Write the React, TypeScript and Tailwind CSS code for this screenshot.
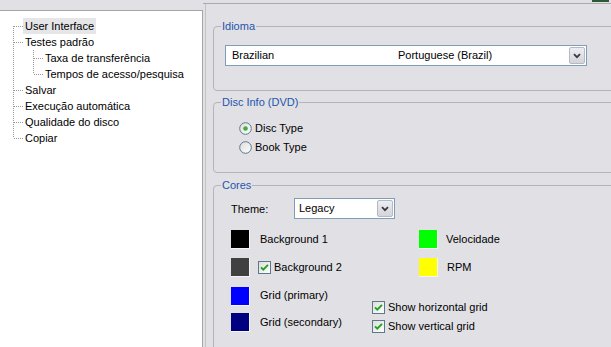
import React from 'react';

type TreeItem = { label: string; kind: 'first' | 'mid' | 'last' | 'child' | 'lastChild'; selected?: boolean };

const tree: TreeItem[] = [
  { label: 'User Interface', kind: 'first', selected: true },
  { label: 'Testes padrão', kind: 'mid' },
  { label: 'Taxa de transferência', kind: 'child' },
  { label: 'Tempos de acesso/pesquisa', kind: 'lastChild' },
  { label: 'Salvar', kind: 'mid' },
  { label: 'Execução automática', kind: 'mid' },
  { label: 'Qualidade do disco', kind: 'mid' },
  { label: 'Copiar', kind: 'last' },
];

const Dots = ({ d }: { d: string }) => (
  <path d={d} stroke="#9a9a9a" strokeWidth={1} strokeDasharray="1 1" fill="none" shapeRendering="crispEdges" />
);

const Connector = ({ kind }: { kind: TreeItem['kind'] }) => {
  if (kind === 'child' || kind === 'lastChild') {
    return (
      <svg width="30" height="16" className="shrink-0">
        <Dots d="M0.5 0 V16" />
        <Dots d={kind === 'lastChild' ? 'M20.5 0 V8' : 'M20.5 0 V16'} />
        <Dots d="M21 8.5 H30" />
      </svg>
    );
  }
  const v = kind === 'first' ? 'M0.5 8 V16' : kind === 'last' ? 'M0.5 0 V8' : 'M0.5 0 V16';
  return (
    <svg width="10" height="16" className="shrink-0">
      <Dots d={v} />
      <Dots d="M1 8.5 H10" />
    </svg>
  );
};

const Chevron = () => (
  <svg width="8" height="6" viewBox="0 0 8 6">
    <path d="M1 1.2 L4 4.2 L7 1.2" stroke="#3a3a3a" strokeWidth="1.8" fill="none" />
  </svg>
);

const Combo = ({ w, children }: { w: string; children: React.ReactNode }) => (
  <div className={`flex h-[21px] ${w} items-center border border-[#7f9db9] bg-white`}>
    <div className="flex flex-1 items-center leading-[19px]">{children}</div>
    <div className="mr-[1px] flex h-[17px] w-[16px] items-center justify-center rounded-[2px] border border-[#b6b8c4] bg-gradient-to-b from-[#eceef2] to-[#d3d4dc]">
      <Chevron />
    </div>
  </div>
);

const CheckBox = () => (
  <svg width="13" height="13" viewBox="0 0 13 13" className="shrink-0">
    <defs>
      <linearGradient id="cbg" x1="0" y1="0" x2="1" y2="1">
        <stop offset="0" stopColor="#dcdcd8" />
        <stop offset="1" stopColor="#ffffff" />
      </linearGradient>
    </defs>
    <rect x="0.5" y="0.5" width="12" height="12" fill="url(#cbg)" stroke="#5d7791" shapeRendering="crispEdges" />
    <path d="M3 6.3 L5.3 8.7 L10 3.8" stroke="#21a121" strokeWidth="1.9" fill="none" />
  </svg>
);

const Radio = ({ on }: { on?: boolean }) => (
  <svg width="13" height="13" viewBox="0 0 13 13" className="shrink-0">
    <defs>
      <linearGradient id="rbg" x1="0" y1="0" x2="1" y2="1">
        <stop offset="0" stopColor="#dcdcd8" />
        <stop offset="1" stopColor="#ffffff" />
      </linearGradient>
    </defs>
    <circle cx="6.5" cy="6.5" r="5.8" fill="url(#rbg)" stroke="#5d7791" strokeWidth="1" />
    {on && <circle cx="6.5" cy="6.5" r="2.3" fill="#3fae3f" />}
  </svg>
);

const Swatch = ({ color }: { color: string }) => (
  <div className={`h-[19px] w-[19px] shrink-0 border-b border-r border-[#f4f4f6] ${color}`} />
);

const Group = ({ title, className, children }: { title: string; className?: string; children: React.ReactNode }) => (
  <fieldset className={`mr-[-40px] rounded-[4px] border border-[#b4b4b9] ${className ?? ''}`}>
    <legend className="ml-[7px] px-[1px] leading-[13px] text-[#2455ad]">{title}</legend>
    {children}
  </fieldset>
);

export default function App() {
  return (
    <div className="flex h-[347px] w-[611px] overflow-hidden bg-[#e1e0e5] text-[11px] text-black font-['Liberation_Sans',Arial,sans-serif]">
      {/* tree */}
      <div className="flex w-[203px] shrink-0 flex-col pt-[10px]">
        <div className="flex-1 border-t border-r border-[#a3a3a8] bg-white pt-[7px] pl-[13px]">
          {tree.map((t) => (
            <div key={t.label} className="flex h-[16px] items-center">
              <Connector kind={t.kind} />
              <span className={`px-[2px] leading-[16px] ${t.selected ? 'bg-[#e6e6e8]' : ''}`}>{t.label}</span>
            </div>
          ))}
        </div>
      </div>

      {/* settings */}
      <div className="flex min-w-0 flex-1 flex-col">
        <div className="flex h-[3px] shrink-0 justify-end">
          <div className="mr-[2px] h-[2px] w-[17px] bg-[#2d5a34]" />
        </div>
        <div className="flex-1 border-t border-[#a9a9ae]">
          <div className="ml-[2px] h-full border-l border-[#c2c2c7] pl-[7px] pt-[16px]">
            <Group title="Idioma">
              <div className="pt-[12px] pb-[24px] pl-[11px]">
                <Combo w="w-[362px]">
                  <span className="w-[172px] pl-[6px]">Brazilian</span>
                  <span>Portuguese (Brazil)</span>
                </Combo>
              </div>
            </Group>

            <Group title="Disc Info (DVD)" className="mt-[5px]">
              <div className="flex flex-col gap-[3px] pt-[11px] pb-[17px] pl-[25px]">
                <div className="flex h-[16px] items-center gap-[3px]">
                  <Radio on />
                  <span>Disc Type</span>
                </div>
                <div className="flex h-[16px] items-center gap-[3px]">
                  <Radio />
                  <span>Book Type</span>
                </div>
              </div>
            </Group>

            <Group title="Cores" className="mt-[6px]">
              <div className="pt-[6px] pb-[20px] pl-[17px]">
                <div className="flex h-[21px] items-center">
                  <span className="w-[63px] pt-[2px]">Theme:</span>
                  <Combo w="w-[101px]">
                    <span className="pl-[4px]">Legacy</span>
                  </Combo>
                </div>

                <div className="mt-[11px] flex h-[19px] items-center">
                  <div className="flex w-[188px] items-center">
                    <Swatch color="bg-black" />
                    <span className="ml-[10px]">Background 1</span>
                  </div>
                  <Swatch color="bg-[#00ff00]" />
                  <span className="ml-[8px]">Velocidade</span>
                </div>

                <div className="mt-[9px] flex h-[19px] items-center">
                  <div className="flex w-[188px] items-center">
                    <Swatch color="bg-[#404040]" />
                    <span className="ml-[8px]"><CheckBox /></span>
                    <span className="ml-[3px]">Background 2</span>
                  </div>
                  <Swatch color="bg-[#ffff00]" />
                  <span className="ml-[9px]">RPM</span>
                </div>

                <div className="mt-[10px] flex">
                  <div className="flex w-[141px] flex-col gap-[7px]">
                    <div className="flex h-[19px] items-center">
                      <Swatch color="bg-[#0000ff]" />
                      <span className="ml-[10px] pb-[2px]">Grid (primary)</span>
                    </div>
                    <div className="flex h-[19px] items-center">
                      <Swatch color="bg-[#000080]" />
                      <span className="ml-[10px]">Grid (secondary)</span>
                    </div>
                  </div>
                  <div className="flex flex-col gap-[3px] pt-[12px]">
                    <div className="flex h-[16px] items-center gap-[3px]">
                      <CheckBox />
                      <span>Show horizontal grid</span>
                    </div>
                    <div className="flex h-[16px] items-center gap-[3px]">
                      <CheckBox />
                      <span>Show vertical grid</span>
                    </div>
                  </div>
                </div>
              </div>
            </Group>
          </div>
        </div>
      </div>
    </div>
  );
}
